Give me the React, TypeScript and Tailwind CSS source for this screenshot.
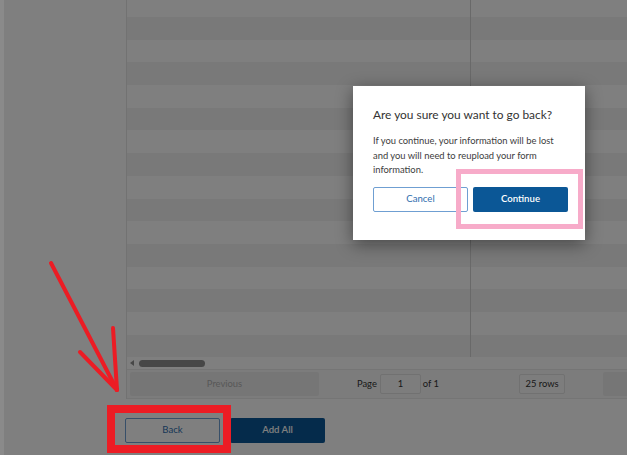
import { useState } from 'react';

const ROWS = Array.from({ length: 15 }, (_, i) => i);

function BackDialog({ onCancel, onContinue }: { onCancel: () => void; onContinue: () => void }) {
  return (
    <div className="absolute left-[349px] top-[86px] w-[232px] bg-white pb-[28px] pl-[20px] pr-[17px] pt-[21px] shadow-[0_4px_16px_rgba(0,0,0,0.45)]">
      <h2 className="text-[11.9px] leading-[16px] text-[#333]">Are you sure you want to go back?</h2>
      <p className="mt-[11px] text-[9.4px] leading-[14.5px] text-[#3d3d3d]">
        If you continue, your information will be lost
        <br />
        and you will need to reupload your form
        <br />
        information.
      </p>
      <div className="mt-[9px] flex gap-[5px]">
        <button
          onClick={onCancel}
          className="h-[25px] w-[95px] rounded-[2px] border border-[#6f9fd2] bg-white text-[9.6px] text-[#2f6eae]"
        >
          Cancel
        </button>
        <button
          onClick={onContinue}
          className="h-[25px] w-[95px] rounded-[2px] bg-[#0b5796] text-[9.6px] font-semibold text-white"
        >
          Continue
        </button>
      </div>
    </div>
  );
}

export default function App() {
  const [open, setOpen] = useState(true);

  return (
    <div className="h-[455px] w-[627px] overflow-hidden bg-[#8a8a8a] pl-[4px] font-['Lato','Noto_Sans',sans-serif]">
      <div className="relative h-full overflow-hidden bg-white pl-[121px]">
        {/* table */}
        <div className="ml-px flex h-[399px] w-[669px] flex-col border-l border-[#e4e4e4]">
          <div className="relative flex-1 overflow-hidden">
            <div className="h-[17px] bg-white" />
            {ROWS.map((r) => (
              <div key={r} className={`h-[22.7px] ${r % 2 === 0 ? 'bg-[#f3f3f3]' : 'bg-white'}`} />
            ))}
            <div className="absolute bottom-0 left-[343px] top-0 w-px bg-[#d2d2d2]" />
          </div>
          <div className="flex h-[12px] items-center gap-[5px] pl-[3px]">
            <div className="h-0 w-0 border-y-[3px] border-r-[4px] border-y-transparent border-r-[#8e8e8e]" />
            <div className="h-[7px] w-[66px] rounded-full bg-[#8e8e8e]" />
          </div>
          <div className="flex h-[30px] items-center border-y border-[#ebebeb] bg-[#f8f8f8] px-[3px] text-[9.4px] text-[#333]">
            <div className="flex h-[24px] w-[189px] items-center justify-center rounded-[2px] bg-[#ececec] text-[#b0b0b0]">
              Previous
            </div>
            <div className="flex flex-1 items-center justify-center">
              <span>Page</span>
              <div className="ml-[3px] flex h-[20px] w-[41px] items-center justify-center rounded-[2px] border border-[#e2e2e2] bg-[#fafafa]">
                1
              </div>
              <span className="ml-[2px]">of 1</span>
              <div className="ml-[80px] flex h-[20px] w-[46px] items-center justify-center rounded-[2px] border border-[#e2e2e2] bg-[#fafafa]">
                25 rows
              </div>
            </div>
            <div className="flex h-[24px] w-[189px] items-center justify-center rounded-[2px] bg-[#ececec] text-[#b0b0b0]">
              Next
            </div>
          </div>
        </div>

        {/* footer buttons */}
        <div className="mt-[19px] flex gap-[10px]">
          <button className="h-[25px] w-[95px] rounded-[2px] border border-[#6f9fd2] bg-white text-[9.6px] text-[#2f6eae]">
            Back
          </button>
          <button className="h-[25px] w-[95px] rounded-[2px] bg-[#0b5796] text-[9.6px] font-semibold text-white">
            Add All
          </button>
        </div>

        {/* modal backdrop */}
        <div className="absolute inset-0 bg-black/50" />

        {open && <BackDialog onCancel={() => setOpen(false)} onContinue={() => setOpen(false)} />}

        {/* annotations */}
        <div className="absolute left-[452px] top-[169px] h-[60px] w-[127px] border-[5px] border-[#f7abc9]" />
        <div className="absolute left-[103px] top-[405px] h-[48px] w-[124px] border-[8px] border-[#ec1c24]" />
        <svg className="absolute left-0 top-0" width="623" height="455" viewBox="0 0 623 455">
          <g stroke="#ec1c24" strokeWidth="4" strokeLinecap="round" fill="none">
            <path d="M47 263 L113 390" />
            <path d="M109 328 L113 390" />
            <path d="M76 352 L113 390" />
          </g>
        </svg>
      </div>
    </div>
  );
}
